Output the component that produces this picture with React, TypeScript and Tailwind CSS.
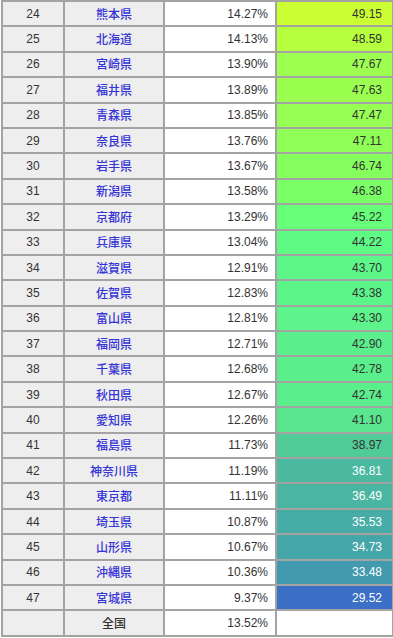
import React from 'react';

type Row = { rank: number; name: string; rate: string; score: string; bg: string; light?: boolean };

const rows: Row[] = [
  { rank: 24, name: '熊本県', rate: '14.27%', score: '49.15', bg: '#ccff33' },
  { rank: 25, name: '北海道', rate: '14.13%', score: '48.59', bg: '#b6ff3f' },
  { rank: 26, name: '宮崎県', rate: '13.90%', score: '47.67', bg: '#9dff4f' },
  { rank: 27, name: '福井県', rate: '13.89%', score: '47.63', bg: '#9bff50' },
  { rank: 28, name: '青森県', rate: '13.85%', score: '47.47', bg: '#97ff53' },
  { rank: 29, name: '奈良県', rate: '13.76%', score: '47.11', bg: '#8fff58' },
  { rank: 30, name: '岩手県', rate: '13.67%', score: '46.74', bg: '#85ff5e' },
  { rank: 31, name: '新潟県', rate: '13.58%', score: '46.38', bg: '#7bff66' },
  { rank: 32, name: '京都府', rate: '13.29%', score: '45.22', bg: '#66ff77' },
  { rank: 33, name: '兵庫県', rate: '13.04%', score: '44.22', bg: '#5ffa84' },
  { rank: 34, name: '滋賀県', rate: '12.91%', score: '43.70', bg: '#5df789' },
  { rank: 35, name: '佐賀県', rate: '12.83%', score: '43.38', bg: '#5cf58a' },
  { rank: 36, name: '富山県', rate: '12.81%', score: '43.30', bg: '#5cf48b' },
  { rank: 37, name: '福岡県', rate: '12.71%', score: '42.90', bg: '#5bf08c' },
  { rank: 38, name: '千葉県', rate: '12.68%', score: '42.78', bg: '#5bef8c' },
  { rank: 39, name: '秋田県', rate: '12.67%', score: '42.74', bg: '#5bee8c' },
  { rank: 40, name: '愛知県', rate: '12.26%', score: '41.10', bg: '#5ae68e' },
  { rank: 41, name: '福島県', rate: '11.73%', score: '38.97', bg: '#51cb98' },
  { rank: 42, name: '神奈川県', rate: '11.19%', score: '36.81', bg: '#4bb9a0', light: true },
  { rank: 43, name: '東京都', rate: '11.11%', score: '36.49', bg: '#4ab6a1', light: true },
  { rank: 44, name: '埼玉県', rate: '10.87%', score: '35.53', bg: '#47aca6', light: true },
  { rank: 45, name: '山形県', rate: '10.67%', score: '34.73', bg: '#45a6a8', light: true },
  { rank: 46, name: '沖縄県', rate: '10.36%', score: '33.48', bg: '#4399ae', light: true },
  { rank: 47, name: '宮城県', rate: '9.37%', score: '29.52', bg: '#3b70c6', light: true },
];

const cell = 'border-2 border-[#a3a3a3] h-[25.4px] p-0 align-middle';

const App: React.FC = () => {
  return (
    <div className="w-[393px] h-[638px] overflow-hidden bg-white" style={{ fontFamily: '"Liberation Sans", Arial, sans-serif' }}>
      <table className="ml-[1px] w-[391px] table-fixed border-collapse text-[12px] leading-none text-[#333]">
        <colgroup>
          <col className="w-[62px]" />
          <col className="w-[100px]" />
          <col className="w-[112px]" />
          <col className="w-[117px]" />
        </colgroup>
        <tbody>
          {rows.map((r) => (
            <tr key={r.rank}>
              <td className={`${cell} bg-[#eeeeee] text-center`}>{r.rank}</td>
              <td
                className={`${cell} bg-[#eeeeee] text-center font-medium text-[#3434d6]`}
                style={{ fontFamily: '"Noto Sans CJK JP", sans-serif' }}
              >
                {r.name}
              </td>
              <td className={`${cell} bg-white text-right pr-[7px]`}>{r.rate}</td>
              <td
                className={`${cell} text-right pr-[10px] ${r.light ? 'text-white' : 'text-[#333]'}`}
                style={{ backgroundColor: r.bg }}
              >
                {r.score}
              </td>
            </tr>
          ))}
          <tr>
            <td className={`${cell} bg-[#eeeeee]`}></td>
            <td
              className={`${cell} bg-[#eeeeee] text-center font-medium text-[#333]`}
              style={{ fontFamily: '"Noto Sans CJK JP", sans-serif' }}
            >
              全国
            </td>
            <td className={`${cell} bg-white text-right pr-[7px]`}>13.52%</td>
            <td className={`${cell} bg-white`}></td>
          </tr>
        </tbody>
      </table>
    </div>
  );
};

export default App;
